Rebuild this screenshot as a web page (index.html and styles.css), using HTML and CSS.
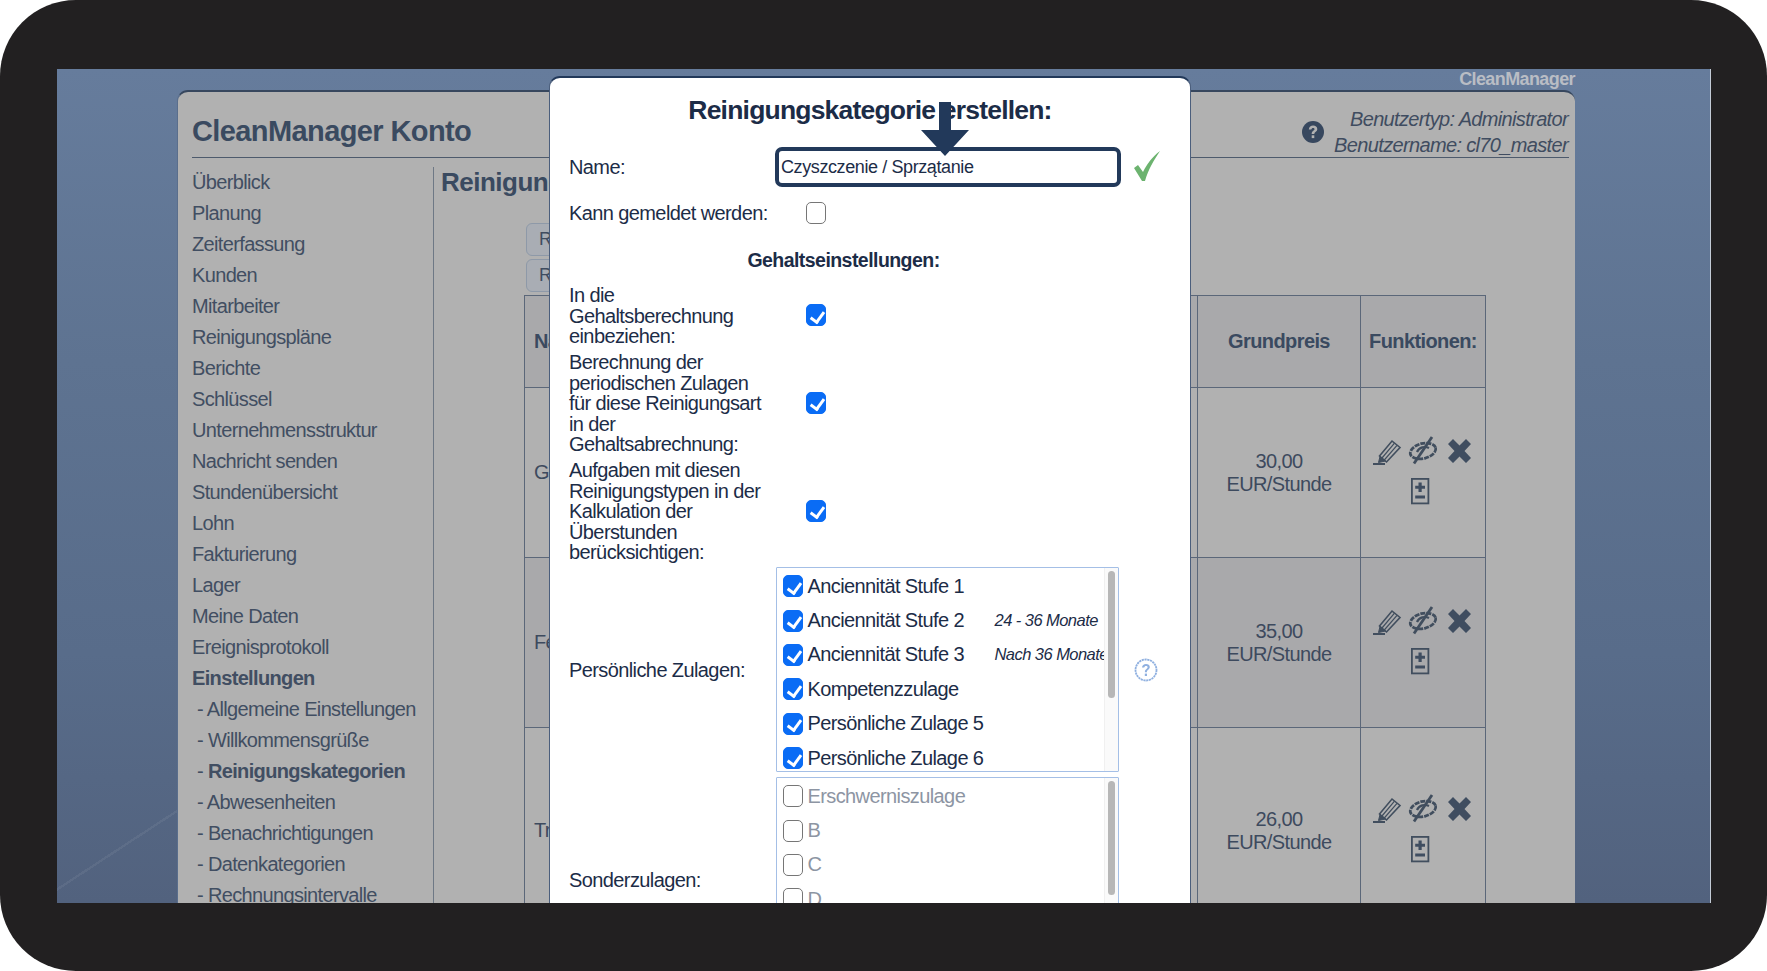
FILE: index.html
```html
<!DOCTYPE html>
<html lang="de">
<head>
<meta charset="utf-8">
<title>CleanManager Konto</title>
<link rel="stylesheet" href="styles.css">
</head>
<body>
<div class="frame">
<div class="screen">
  <div class="brand">CleanManager</div>
  <div class="panel">
    <header class="head">
      <h1>CleanManager Konto</h1>
      <div class="user">
        <svg class="help" viewBox="0 0 24 24"><circle cx="12" cy="12" r="11" fill="#37475e"/><path d="M7.800 9.400c.2-2.500 2-3.900 4.300-3.900 2.400 0 4.200 1.400 4.200 3.500 0 2.900-3 3-3 5.100h-2.600c-.2-3.400 2.800-3.500 2.800-4.900 0-.8-.6-1.300-1.500-1.300s-1.500.6-1.700 1.600z" fill="#b1b1b1"/><rect x="10.700" y="15.300" width="2.600" height="2.800" fill="#b1b1b1"/></svg>
        <div class="user-text"><div>Benutzertyp: Administrator</div><div>Benutzername: cl70_master</div></div>
      </div>
    </header>
    <div class="body">
      <nav class="side">
        <a>Überblick</a><a>Planung</a><a>Zeiterfassung</a><a>Kunden</a><a>Mitarbeiter</a><a>Reinigungspläne</a><a>Berichte</a><a>Schlüssel</a><a>Unternehmensstruktur</a><a>Nachricht senden</a><a>Stundenübersicht</a><a>Lohn</a><a>Fakturierung</a><a>Lager</a><a>Meine Daten</a><a>Ereignisprotokoll</a>
        <a class="strong">Einstellungen</a>
        <a class="sub">- Allgemeine Einstellungen</a><a class="sub">- Willkommensgrüße</a>
        <a class="sub">- <b>Reinigungskategorien</b></a>
        <a class="sub">- Abwesenheiten</a><a class="sub">- Benachrichtigungen</a><a class="sub">- Datenkategorien</a><a class="sub">- Rechnungsintervalle</a>
      </nav>
      <main class="content">
        <h2>Reinigungskategorien</h2>
        <div class="btns"><button>Reinigung</button><button>Reinigung</button></div>
        <table class="grid">
          <colgroup><col class="c1"><col class="c2"><col class="c3"><col class="c4"></colgroup>
          <tr class="r-head shade"><th class="first">Name</th><th></th><th>Grundpreis</th><th>Funktionen:</th></tr>
          <tr class="r1"><td class="first">Grundreinigung</td><td></td><td>30,00<br>EUR/Stunde</td><td class="fn"><svg class="fn-icons" viewBox="0 0 100 70"><use href="#fnset"/></svg></td></tr>
          <tr class="r1 shade"><td class="first">Fensterreinigung</td><td></td><td>35,00<br>EUR/Stunde</td><td class="fn"><svg class="fn-icons" viewBox="0 0 100 70"><use href="#fnset"/></svg></td></tr>
          <tr class="r3"><td class="first">Treppenhaus</td><td></td><td>26,00<br>EUR/Stunde</td><td class="fn"><svg class="fn-icons" viewBox="0 0 100 70"><use href="#fnset"/></svg></td></tr>
        </table>
      </main>
    </div>
  </div>

  <section class="modal">
    <h3>Reinigungskategorie erstellen:</h3>
    <div class="row name-row">
      <label class="lab">Name:</label>
      <input class="name" type="text" value="Czyszczenie / Sprzątanie">
      <svg class="ok" viewBox="0 0 26 30"><path d="M0 17l4-3 5 7C13 13 18 6 26 0 20 9 14 19 11 30H8z" fill="#6cb36f"/></svg>
    </div>
    <div class="row report-row">
      <label class="lab">Kann gemeldet werden:</label>
      <input class="chk" type="checkbox">
    </div>
    <h4>Gehaltseinstellungen:</h4>
    <div class="row tall t1">
      <label class="lab">In die Gehaltsberechnung einbeziehen:</label>
      <input class="chk" type="checkbox" checked>
    </div>
    <div class="row tall t2">
      <label class="lab">Berechnung der periodischen Zulagen für diese Reinigungsart in der Gehaltsabrechnung:</label>
      <input class="chk" type="checkbox" checked>
    </div>
    <div class="row tall t2">
      <label class="lab">Aufgaben mit diesen Reinigungstypen in der Kalkulation der Überstunden berücksichtigen:</label>
      <input class="chk" type="checkbox" checked>
    </div>
    <div class="row list-row">
      <label class="lab">Persönliche Zulagen:</label>
      <div class="list l1">
        <div class="items">
          <div class="item"><input class="chk" type="checkbox" checked><span class="iname">Anciennität Stufe 1</span></div>
          <div class="item"><input class="chk" type="checkbox" checked><span class="iname">Anciennität Stufe 2</span><em>24 - 36 Monate</em></div>
          <div class="item"><input class="chk" type="checkbox" checked><span class="iname">Anciennität Stufe 3</span><em>Nach 36 Monaten</em></div>
          <div class="item"><input class="chk" type="checkbox" checked><span class="iname">Kompetenzzulage</span></div>
          <div class="item"><input class="chk" type="checkbox" checked><span class="iname">Persönliche Zulage 5</span></div>
          <div class="item"><input class="chk" type="checkbox" checked><span class="iname">Persönliche Zulage 6</span></div>
        </div>
        <div class="track"><div class="thumb"></div></div>
      </div>
      <svg class="q" viewBox="0 0 24 24"><circle cx="12" cy="12" r="10.500" fill="none" stroke="#8fb0e0" stroke-width="1.800" stroke-dasharray="2.200 .6"/><path d="M8 9.500c.2-2.200 1.800-3.500 4-3.500s3.800 1.300 3.800 3.100c0 2.600-2.900 2.700-2.900 5.100h-2c-.1-3.100 2.700-3.300 2.700-4.900 0-.9-.6-1.400-1.600-1.400s-1.600.6-1.800 1.600z" fill="#8fb0e0"/><rect x="10.800" y="15.600" width="2.200" height="2.400" fill="#8fb0e0"/></svg>
    </div>
    <div class="row list-row second">
      <label class="lab">Sonderzulagen:</label>
      <div class="list l2">
        <div class="items">
          <div class="item off"><input class="chk" type="checkbox"><span class="iname">Erschwerniszulage</span></div>
          <div class="item off"><input class="chk" type="checkbox"><span class="iname">B</span></div>
          <div class="item off"><input class="chk" type="checkbox"><span class="iname">C</span></div>
          <div class="item off"><input class="chk" type="checkbox"><span class="iname">D</span></div>
        </div>
        <div class="track"><div class="thumb"></div></div>
      </div>
    </div>
    <svg class="arrow" viewBox="0 0 48 54"><path d="M18 0h12v28h18L24 54 0 28h18z" fill="#22395a"/></svg>
  </section>
</div>
</div>

<svg class="defs" width="0" height="0" aria-hidden="true">
  <defs>
    <g id="fnset">
      <g fill="none" stroke="#414e5e">
        <path d="M7.500 20 20 5l8 6.500L14.500 26z" stroke-width="1.600"/>
        <path d="M10 22 22.500 7.200M12.300 24 25 9.300" stroke-width="1.200"/>
        <path d="M8 20.500l-1.500 6 7-1.500z" fill="#414e5e" stroke-width="1"/>
        <path d="M1 28h12" stroke-width="2"/>
        <ellipse cx="51" cy="15" rx="13" ry="7.500" transform="rotate(-14 51 15)" stroke-width="2.800" stroke-dasharray="5 1"/>
        <path d="M45 16c2-5 8-6 12-4" stroke-width="2.200"/>
        <path d="M42 27.500 60 1" stroke-width="2.800"/>
        <rect x="39.900" y="42.900" width="16.500" height="24.500" stroke-width="1.800"/>
      </g>
      <path d="M76 8l5-5 6.500 6.500L94 3l5 5-6.500 7 6.500 7-5 5-6.500-6.500L81 27l-5-5 6.500-7z" fill="#3f4d60"/>
      <path d="M46.500 46.500h3.200v3.200h3.300v3h-3.300v3.300h-3.200v-3.300h-3.300v-3h3.300z" fill="#3f4d60"/>
      <rect x="43.200" y="59.500" width="9.800" height="3" fill="#3f4d60"/>
    </g>
  </defs>
</svg>
</body>
</html>
```

FILE: styles.css
```css
* { box-sizing: border-box; }
html, body { margin: 0; background: #fff; }
body { font-family: "Liberation Sans", Arial, sans-serif; }

.frame {
  width: 1767px; height: 971px;
  background: #222021;
  border-radius: 76px;
  padding: 69px 56px 68px 57px;
  overflow: hidden;
}
.screen {
  position: relative;
  height: 834px;
  overflow: hidden;
  border-right: 1px solid #c3cbd6;
  background:
    linear-gradient(146.800deg, transparent 0 89.700%, rgba(255,255,255,.06) 89.700% 90%, transparent 90%) 0 0 / 121px 100% no-repeat,
    linear-gradient(180deg, #667c9c 0, #5e7391 35%, #586c8a 70%, #52627e 100%);
  padding: 21px 0 0 120px;
}
.brand {
  position: absolute; right: 135px; top: 0;
  font-size: 18px; line-height: 20px; font-weight: 700;
  letter-spacing: -.6px;
  color: #b9bdc4;
}

.panel {
  width: 1398px; height: 813px;
  background: #b1b1b1;
  border-radius: 11px 11px 0 0;
  border-top: 2px solid #37475e;
  border-left: 1px solid #5a6e8c;
  padding: 0 6px 0 14px;
  color: #3d4a5e;
  overflow: hidden;
}
.head {
  display: flex; justify-content: space-between; align-items: flex-end;
  height: 66px;
  border-bottom: 1px solid #4d5a6c;
}
.head h1 {
  margin: 0 0 7px;
  font-size: 29px; line-height: 38px; font-weight: 700;
  color: #3a4a60;
  letter-spacing: -.6px;
}
.user { display: flex; align-items: center; gap: 9px; }
.help { width: 24px; height: 24px; }
.user-text {
  font-style: italic; font-size: 20px; line-height: 26px;
  text-align: right; color: #3f4c60;
  margin: 0 1px -1px 0;
  letter-spacing: -.65px;
}

.body { display: flex; margin-top: 9px; }
.side {
  width: 242px; height: 760px;
  border-right: 1px solid #6e7885;
  padding-right: 8px;
  display: flex; flex-direction: column;
}
.side a {
  display: block; flex: none;
  height: 31px; line-height: 31px;
  font-size: 20px;
  color: #414e62;
  letter-spacing: -.65px;
  white-space: nowrap;
}
.side .strong { font-weight: 700; }
.side .sub { padding-left: 5px; }

.content { position: relative; flex: 1; padding-left: 7px; }
.content h2 {
  margin: -2px 0 0;
  font-size: 26px; line-height: 34px; font-weight: 700;
  color: #3a4a60;
  letter-spacing: -.5px;
  white-space: nowrap;
}
.btns {
  display: flex; flex-direction: column; gap: 3px;
  padding: 24px 0 0 85px;
}
.btns button {
  width: 120px; height: 33px;
  text-align: left; padding: 0 12px;
  font: 18px "Liberation Sans", Arial, sans-serif;
  color: #3f4c60;
  background: #a9adb4;
  border: 1px solid #8e99a8;
  border-radius: 6px;
}
.grid {
  margin: 3px 0 0 83px;
  border-collapse: collapse;
  table-layout: fixed;
  width: 961px;
  font-size: 20px;
  line-height: 23px;
  letter-spacing: -.6px;
  color: #3d4a5e;
}
.c1 { width: 400px; }
.c2 { width: 273px; }
.c3 { width: 163px; }
.c4 { width: 125px; }
.grid th, .grid td {
  border: 1px solid #5b6779;
  padding: 0;
  text-align: center;
}
.grid th { font-weight: 700; color: #3a4a60; }
.grid .first { text-align: left; padding-left: 9px; white-space: nowrap; overflow: hidden; }
.shade { background: #a9a9ab; }
.r-head { height: 92px; }
.r1 { height: 170px; }
.r3 { height: 206px; }
.grid td.fn { vertical-align: middle; }
.fn-icons { display: block; width: 100px; height: 70px; margin: 0 auto; transform: translate(-1px, -2px); }

.modal {
  position: absolute;
  left: 492px; top: 7px; bottom: 0; width: 642px;
  background: #fff;
  border-top: 2px solid #22395a;
  border-left: 1px solid #4b5e7c;
  border-right: 1px solid #4b5e7c;
  border-radius: 11px 11px 0 0;
  color: #1c2c47;
  overflow: hidden;
  padding: 0 0 0 19px;
}
.modal h3 {
  margin: 0; padding-top: 15px;
  width: 602px;
  text-align: center;
  font-size: 26.500px; line-height: 34px; font-weight: 700;
  letter-spacing: -.8px;
  color: #1c2c47;
}
.row { display: flex; align-items: center; font-size: 20px; }
.lab { width: 207px; flex: none; line-height: 20.600px; padding-right: 8px; letter-spacing: -.6px; }
.tall .lab, .list-row .lab { padding-top: 2px; }
.name-row { height: 40px; margin-top: 20px; }
.name {
  width: 346px; height: 40px;
  margin-left: -1px;
  border: 4px solid #22395a;
  border-radius: 7px;
  padding: 0 2px;
  font: 18px "Liberation Sans", Arial, sans-serif;
  letter-spacing: -.4px;
  color: #1c2c47;
  outline: none;
}
.ok { width: 26px; height: 30px; margin: -2px 0 0 13px; }
.report-row { height: 24px; margin-top: 14px; }
.report-row .lab { white-space: nowrap; }
.report-row .chk { margin-left: 30px; }
.modal h4 {
  margin: 23px 0 0; width: 549px;
  text-align: center;
  font-size: 19.500px; line-height: 24px; font-weight: 700;
  letter-spacing: -.55px;
}
.tall .chk { margin-left: 30px; }
.t1 { margin-top: 11px; height: 64px; }
.t2 { margin-top: 3px; height: 105px; }

.chk {
  appearance: none;
  position: relative;
  flex: none;
  width: 20px; height: 22px; margin: 0;
  background: #fff;
  border: 1.500px solid #767676;
  border-radius: 5px;
}
.chk:checked { background: #0a6cf5; border-color: #0a6cf5; }
.chk:checked::after {
  content: "";
  position: absolute; left: 6px; top: 3.500px;
  width: 6px; height: 11px;
  border: solid #fff; border-width: 0 3px 3px 0;
  transform: rotate(36deg);
}

.list-row { margin-top: 4px; height: 205px; }
.list-row.second { align-items: flex-start; margin-top: 5px; height: 200px; }
.second .lab { margin-top: 91px; }
.list {
  display: flex;
  width: 343px; height: 205px;
  border: 1.500px solid #a4bfe6;
  border-radius: 1px;
}
.l2 { height: 220px; }
.items { flex: 1; overflow: hidden; padding: 1px 0 0 5.500px; min-width: 0; }
.item { display: flex; align-items: center; height: 34.400px; white-space: nowrap; font-size: 20px; letter-spacing: -.6px; }
.item .chk { margin-right: 5px; }
.iname { width: 187px; flex: none; }
.item em { font-size: 16.500px; letter-spacing: -.55px; }
.off { color: #8d95a3; }
.off .iname { width: auto; }
.track {
  width: 14px; flex: none;
  background: #fafafa;
  border-left: 1px solid #f0f0f0;
  padding: 3px 3px 0;
}
.thumb { width: 7px; height: 127px; background: #b7b7b7; border-radius: 4px; }
.l2 .thumb { height: 114px; }
.q { width: 24px; height: 24px; margin-left: 15px; }

.arrow {
  position: absolute;
  left: 371px; top: 24px;
  width: 48px; height: 54px;
}
.defs { position: absolute; }
```
